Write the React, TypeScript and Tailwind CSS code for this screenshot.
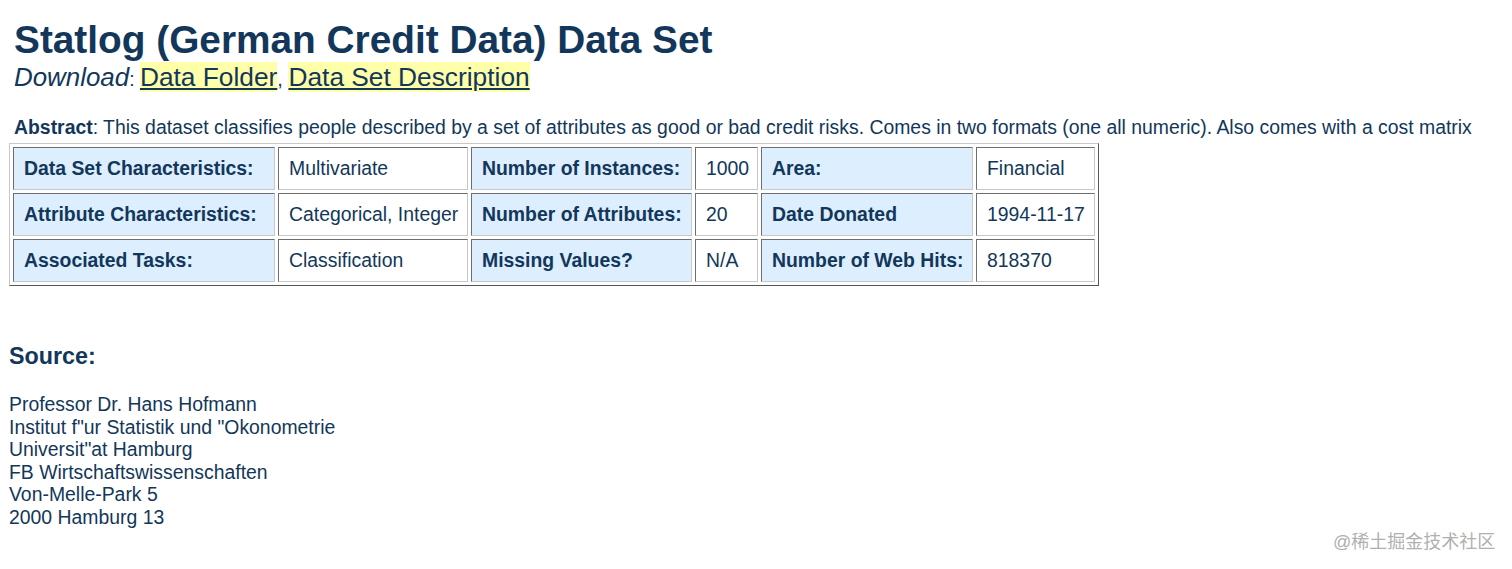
import React from "react";

const C = "text-[#12375a]";

const rows: [string, string, string, string, string, string][] = [
  ["Data Set Characteristics:", "Multivariate", "Number of Instances:", "1000", "Area:", "Financial"],
  ["Attribute Characteristics:", "Categorical, Integer", "Number of Attributes:", "20", "Date Donated", "1994-11-17"],
  ["Associated Tasks:", "Classification", "Missing Values?", "N/A", "Number of Web Hits:", "818370"],
];

function Cell({ text, head }: { text: string; head: boolean }) {
  return (
    <div
      className={`h-[43px] flex items-center pl-[10px] border border-solid border-t-[#6e6e6e] border-l-[#6e6e6e] border-b-[#c8c8c8] border-r-[#c8c8c8] ${
        head ? "bg-[#ddeeff] font-bold" : "bg-white"
      }`}
    >
      <span className="text-[19.4px] leading-none whitespace-nowrap">{text}</span>
    </div>
  );
}

export default function App() {
  return (
    <div
      className={`relative w-[1512px] h-[569px] bg-white ${C}`}
      style={{ fontFamily: '"Liberation Sans", Arial, sans-serif' }}
    >
      <div className="pl-[14px] pt-[18px]">
        <h1 className="text-[38.8px] font-bold leading-[44px]">Statlog (German Credit Data) Data Set</h1>
        <div className="text-[25.9px] leading-[30px]">
          <span className="italic">Download</span>
          <span className="text-[19.4px] leading-none">: </span>
          <span className="bg-[#ffffaa] underline text-[26.3px] leading-none">Data Folder</span>
          <span className="text-[20px] leading-none">, </span>
          <span className="bg-[#ffffaa] underline text-[26.3px] leading-none">Data Set Description</span>
        </div>
        <p className="mt-[24px] text-[19.4px] leading-[22px] whitespace-nowrap">
          <span className="font-bold">Abstract</span>: This dataset classifies people described by a set of attributes as good or bad credit risks. Comes in two formats (one all numeric). Also comes with a cost matrix
        </p>
      </div>
      <div className="ml-[9px] mt-[5px] inline-block border border-solid border-t-[#c8c8c8] border-l-[#c8c8c8] border-b-[#555555] border-r-[#555555] p-[3px]">
        <div className="grid grid-cols-[262px_190px_221px_63px_212px_119px] gap-[3px]">
          {rows.map((r, i) =>
            r.map((t, j) => <Cell key={`${i}-${j}`} text={t} head={j % 2 === 0} />)
          )}
        </div>
      </div>
      <div className="pl-[9px] mt-[57px]">
        <h2 className="text-[23.3px] font-bold leading-[26px]">Source:</h2>
        <div className="mt-[24px] text-[19.4px] leading-[22.6px]">
          <div>Professor Dr. Hans Hofmann</div>
          <div>Institut f"ur Statistik und "Okonometrie</div>
          <div>Universit"at Hamburg</div>
          <div>FB Wirtschaftswissenschaften</div>
          <div>Von-Melle-Park 5</div>
          <div>2000 Hamburg 13</div>
        </div>
      </div>
      <div
        className="absolute left-[1333px] top-[531px] text-[18px] leading-[22px] text-[#b0b0b0]"
        style={{ fontFamily: '"Liberation Sans", "Noto Sans CJK SC", sans-serif' }}
      >
        @稀土掘金技术社区
      </div>
    </div>
  );
}
